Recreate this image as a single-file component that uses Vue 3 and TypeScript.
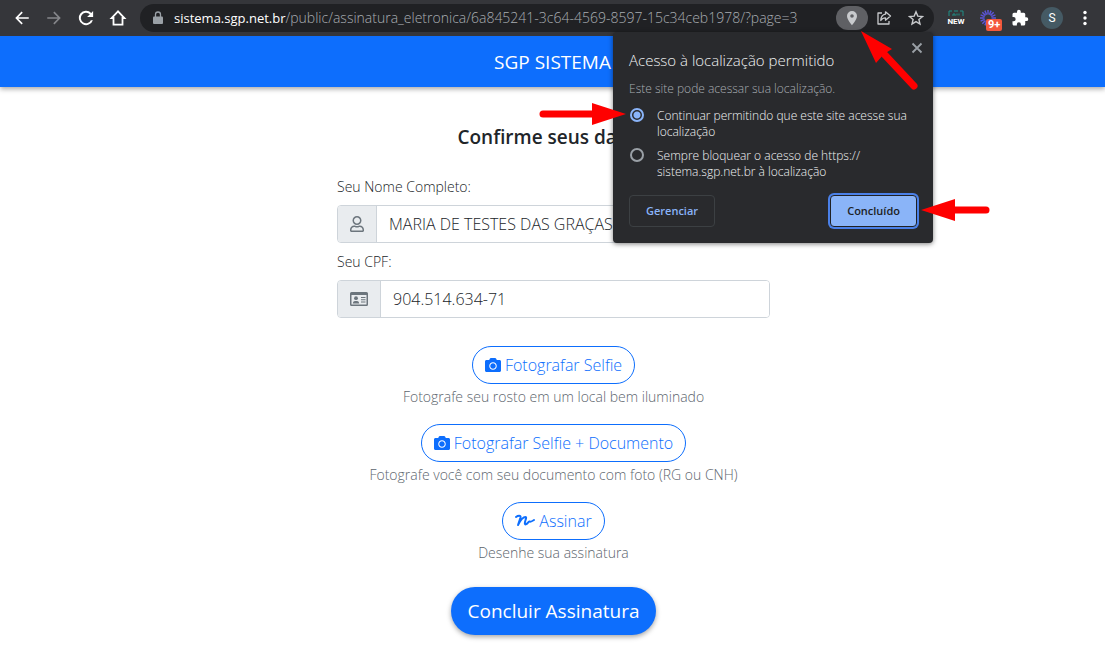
<script setup lang="ts">
import { ref } from 'vue'

const fullName = ref('MARIA DE TESTES DAS GRAÇAS')
const cpf = ref('904.514.634-71')
const permission = ref<'allow' | 'block'>('allow')
</script>

<template>
  <div class="window">
    <header class="toolbar">
      <nav class="nav" aria-label="Navegação">
        <button type="button" class="tool" aria-label="Voltar">
          <svg viewBox="0 0 24 24"><path d="M21 11H7l6-6-1.600-1.600L3 12l8.400 8.600L13 19l-6-6h14z" /></svg>
        </button>
        <button type="button" class="tool dim" aria-label="Avançar">
          <svg viewBox="0 0 24 24"><path d="M3 11h14l-6-6 1.600-1.600L21 12l-8.400 8.600L11 19l6-6H3z" /></svg>
        </button>
        <button type="button" class="tool" aria-label="Recarregar">
          <svg viewBox="0 0 24 24"><path d="M19 5.200A9.600 9.600 0 1 0 21.200 15h-2.700a7 7 0 1 1-1.400-7.900L13.500 10.500H21.500V2.500z" /></svg>
        </button>
        <button type="button" class="tool" aria-label="Página inicial">
          <svg viewBox="0 0 24 24"><path d="M12 3.200 3.500 12H6v8.800h12V12h2.500z" fill="none" stroke="currentColor" stroke-width="2.400" /></svg>
        </button>
      </nav>
      <div class="address">
        <svg class="lock" viewBox="0 0 10 14"><path d="M1 5.500h8q1 0 1 1V12q0 1-1 1H1q-1 0-1-1V6.500q0-1 1-1z" /><path d="M2.500 6V3.500a2.500 2.500 0 0 1 5 0V6" fill="none" stroke="currentColor" stroke-width="1.300" /></svg>
        <span class="url"><b>sistema.sgp.net.br</b>/public/assinatura_eletronica/6a845241-3c64-4569-8597-15c34ceb1978/?page=3</span>
        <button type="button" class="pin" aria-label="Localização">
          <svg viewBox="0 0 12 16"><path fill-rule="evenodd" d="M6 1a5 5 0 0 0-5 5c0 3.800 5 9.200 5 9.200S11 9.800 11 6a5 5 0 0 0-5-5zm0 3.200a1.800 1.800 0 1 1 0 3.600 1.800 1.800 0 0 1 0-3.600z" /></svg>
        </button>
        <button type="button" class="small-tool" aria-label="Compartilhar">
          <svg viewBox="0 0 16 16" fill="none" stroke="currentColor" stroke-width="1.300" stroke-linejoin="round"><path d="M6 3H2v11h11v-3" /><path d="M9.500 1.800 14.500 6l-5 4.200V7.800C7.500 7.800 6 8.500 4.800 10.500 5 7 7 4.500 9.500 4.200z" /></svg>
        </button>
        <button type="button" class="small-tool" aria-label="Adicionar aos favoritos">
          <svg viewBox="0 0 16 16" fill="none" stroke="currentColor" stroke-width="1.400"><path d="m8 1.800 1.800 4.300 4.700.4-3.600 3 1.100 4.600-4-2.500-4 2.500 1.100-4.600-3.600-3 4.700-.4z" /></svg>
        </button>
      </div>
      <div class="extensions">
        <button type="button" class="ext new" aria-label="Extensão">
          <svg viewBox="0 0 16 8" fill="none" stroke="#1f8f86"><path d="M1 6V1h3M6 1h4M12 1h3v5" /><path d="M5 6V4h2v2M9 3.500v2M11 3.500v2" /></svg>
          <span>NEW</span>
        </button>
        <button type="button" class="ext burst" aria-label="Notificações">
          <svg viewBox="0 0 18 18" fill="none" stroke="#5c55d6" stroke-width="1.500"><path d="M9 1v4.500M9 12.500V17M1 9h4.500M12.500 9H17M3.300 3.300l3.200 3.200M11.500 11.500l3.200 3.200M3.300 14.700l3.200-3.200M11.500 6.500l3.200-3.200M5.900 1.600l1.700 4.100M10.400 12.300l1.700 4.100M1.600 12.100l4.100-1.700M12.300 7.600l4.100-1.700M1.600 5.900l4.100 1.700M5.900 16.400l1.700-4.100M10.400 5.700l1.700-4.100" /></svg>
          <span class="badge">9+</span>
        </button>
        <button type="button" class="ext" aria-label="Extensões">
          <svg viewBox="0 0 24 24"><path d="M20.500 11H19V7a2 2 0 0 0-2-2h-4V3.500a2.500 2.500 0 0 0-5 0V5H4a2 2 0 0 0-2 2v3.800h1.500a2.700 2.700 0 0 1 0 5.400H2V20c0 1.100.9 2 2 2h3.800v-1.500a2.700 2.700 0 0 1 5.400 0V22H17a2 2 0 0 0 2-2v-4h1.500a2.500 2.500 0 0 0 0-5z" /></svg>
        </button>
        <button type="button" class="avatar">S</button>
        <button type="button" class="ext menu" aria-label="Menu">
          <svg viewBox="0 0 4 16"><circle cx="2" cy="2.500" r="1.700" /><circle cx="2" cy="8" r="1.700" /><circle cx="2" cy="13.500" r="1.700" /></svg>
        </button>
      </div>

      <section class="popup" aria-labelledby="popup-title">
        <button type="button" class="close" aria-label="Fechar">
          <svg viewBox="0 0 12 12"><path d="m1.500 1.500 9 9m0-9-9 9" stroke="currentColor" stroke-width="1.800" /></svg>
        </button>
        <h2 id="popup-title">Acesso à localização permitido</h2>
        <p>Este site pode acessar sua localização.</p>
        <label class="choice">
          <input v-model="permission" type="radio" name="permission" value="allow" />
          <span>Continuar permitindo que este site acesse sua localização</span>
        </label>
        <label class="choice">
          <input v-model="permission" type="radio" name="permission" value="block" />
          <span>Sempre bloquear o acesso de https://<wbr />sistema.sgp.net.br à localização</span>
        </label>
        <div class="actions">
          <button type="button" class="manage">Gerenciar</button>
          <button type="button" class="done">Concluído</button>
        </div>
        <svg class="arrow to-radio" viewBox="0 0 88 22"><path d="M4 11h50" /><polygon points="53,0 87,11 53,22" /></svg>
        <svg class="arrow to-done" viewBox="0 0 70 22"><path d="M66 11H34" /><polygon points="35,0 1,11 35,22" /></svg>
        <svg class="arrow to-pin" viewBox="0 0 60 62"><path d="M54 56 25 25" /><polygon points="1,1 32,19 24,24 16,33" /></svg>
      </section>
    </header>

    <div class="brand">SGP SISTEMA</div>

    <main>
      <form class="form" @submit.prevent>
        <h1>Confirme seus dados</h1>
        <label class="label" for="name">Seu Nome Completo:</label>
        <div class="group">
          <span class="addon">
            <svg class="person" viewBox="0 0 448 512"><path d="M313.600 304c-28.700 0-42.500 16-89.600 16-47.100 0-60.800-16-89.600-16C60.200 304 0 364.200 0 438.400V464c0 26.500 21.500 48 48 48h352c26.500 0 48-21.500 48-48v-25.600c0-74.200-60.200-134.400-134.400-134.400zM400 464H48v-25.600c0-47.600 38.800-86.400 86.400-86.400 14.600 0 38.300 16 89.600 16 51.700 0 74.900-16 89.600-16 47.600 0 86.400 38.800 86.400 86.400V464zM224 288c79.500 0 144-64.500 144-144S303.500 0 224 0 80 64.500 80 144s64.500 144 144 144zm0-240c52.900 0 96 43.100 96 96s-43.100 96-96 96-96-43.100-96-96 43.100-96 96-96z" /></svg>
          </span>
          <input id="name" v-model="fullName" type="text" />
        </div>
        <label class="label" for="cpf">Seu CPF:</label>
        <div class="group">
          <span class="addon">
            <svg class="card" viewBox="0 0 18 14"><path fill-rule="evenodd" d="M1.500 0h15Q18 0 18 1.500v11q0 1.500-1.500 1.500h-15Q0 14 0 12.500v-11Q0 0 1.500 0zM1.500 3v9.500h15V3z" /><circle cx="6" cy="6.200" r="1.900" /><path d="M2.800 11.500q0-2.500 2-2.500h2.400q2 0 2 2.500zM11 5h4.500v1H11zM11 7.300h4.500v1H11zM11 9.600h4.500v1H11z" /></svg>
          </span>
          <input id="cpf" v-model="cpf" type="text" />
        </div>

        <div class="step">
          <button type="button" class="outline">
            <svg class="camera" viewBox="0 0 512 512"><path d="M512 144v288c0 26.500-21.500 48-48 48H48c-26.500 0-48-21.500-48-48V144c0-26.500 21.500-48 48-48h88l12.300-32.900c7-18.700 24.900-31.100 44.900-31.100h125.500c20 0 37.900 12.400 44.900 31.100L376 96h88c26.500 0 48 21.500 48 48zM376 288c0-66.200-53.800-120-120-120s-120 53.800-120 120 53.800 120 120 120 120-53.800 120-120zm-32 0c0 48.500-39.500 88-88 88s-88-39.500-88-88 39.500-88 88-88 88 39.500 88 88z" /></svg>
            Fotografar Selfie
          </button>
          <small>Fotografe seu rosto em um local bem iluminado</small>
        </div>
        <div class="step">
          <button type="button" class="outline">
            <svg class="camera" viewBox="0 0 512 512"><path d="M512 144v288c0 26.500-21.500 48-48 48H48c-26.500 0-48-21.500-48-48V144c0-26.500 21.500-48 48-48h88l12.300-32.900c7-18.700 24.900-31.100 44.900-31.100h125.500c20 0 37.900 12.400 44.900 31.100L376 96h88c26.500 0 48 21.500 48 48zM376 288c0-66.200-53.800-120-120-120s-120 53.800-120 120 53.800 120 120 120 120-53.800 120-120zm-32 0c0 48.500-39.500 88-88 88s-88-39.500-88-88 39.500-88 88-88 88 39.500 88 88z" /></svg>
            Fotografar Selfie + Documento
          </button>
          <small>Fotografe você com seu documento com foto (RG ou CNH)</small>
        </div>
        <div class="step">
          <button type="button" class="outline">
            <svg class="sign" viewBox="0 0 20 16" fill="none" stroke="currentColor" stroke-width="2" stroke-linecap="round" stroke-linejoin="round"><path d="M1 4C3 2.500 6 2 5.500 4.500L3 12C5 8 8 4 10.500 4c2 0-1.500 5-.5 7 1 1.500 3-2 4.500-2.500 1.500 0 .5 1 4.500-1.500" /></svg>
            Assinar
          </button>
          <small>Desenhe sua assinatura</small>
        </div>
        <button type="submit" class="finish">Concluir Assinatura</button>
      </form>
    </main>
  </div>
</template>

<style>
body {
  margin: 0;
  background: #fff;
}
</style>

<style scoped>
.window {
  font-family: "Open Sans", "Noto Sans", sans-serif;
  color: #212529;
}
.window *,
.window *::before {
  box-sizing: border-box;
}
button,
input {
  font: inherit;
  margin: 0;
}
button {
  padding: 0;
  border: 0;
  background: none;
  color: inherit;
}
svg {
  display: block;
  fill: currentColor;
}
svg[fill="none"] {
  fill: none;
}
.toolbar {
  position: relative;
  z-index: 2;
  display: flex;
  align-items: center;
  height: 36px;
  padding: 0 11px 0 12px;
  background: #35363a;
  color: #fff;
}
.nav {
  display: flex;
  gap: 12px;
  margin-right: 12px;
}
.tool {
  width: 20px;
  height: 20px;
}
.tool svg {
  width: 18px;
  height: 18px;
  margin: auto;
}
.dim {
  color: #85868a;
}
.address {
  display: flex;
  flex: 1;
  align-items: center;
  min-width: 0;
  height: 28px;
  padding: 0 10px 0 13px;
  border-radius: 14px;
  background: #202124;
  color: #c8cacd;
}
.lock {
  flex: none;
  width: 10px;
  height: 14px;
  margin-right: 11px;
  color: #9aa0a6;
}
.url {
  flex: 1;
  min-width: 0;
  overflow: hidden;
  font-size: 14px;
  font-weight: 300;
  line-height: 20px;
  white-space: nowrap;
  color: #a8adb2;
}
.url b {
  font-size: 13px;
  font-weight: 400;
  color: #fff;
}
.pin {
  display: grid;
  place-items: center;
  width: 32px;
  height: 24px;
  border-radius: 12px;
  background: #5f6064;
}
.pin svg {
  width: 12px;
  height: 16px;
}
.small-tool {
  margin-left: 8px;
}
.small-tool + .small-tool {
  margin-left: 16px;
}
.small-tool svg {
  width: 16px;
  height: 16px;
}
.extensions {
  display: flex;
  align-items: center;
  gap: 14px;
  margin-left: 13px;
}
.ext {
  position: relative;
  width: 18px;
}
.ext svg {
  width: 18px;
  height: 18px;
}
.new {
  font: 700 8px/8px Roboto, sans-serif;
}
.ext.new svg {
  width: 16px;
  height: 8px;
  margin: auto;
}
.badge {
  position: absolute;
  top: 10px;
  left: 7px;
  padding: 0 2px;
  border-radius: 2px;
  background: #f4583c;
  font: 700 11px/12px Roboto, sans-serif;
}
.avatar {
  width: 22px;
  height: 22px;
  margin: 0 -1px 0 -2px;
  border-radius: 50%;
  background: #455a64;
  font: 12px/22px Roboto, sans-serif;
}
.ext.menu svg {
  width: 4px;
  height: 16px;
  margin: auto;
}
.popup {
  position: absolute;
  top: 32px;
  right: 172px;
  width: 320px;
  padding: 18px 16px 16px;
  border-radius: 4px;
  background: #292a2d;
  box-shadow: 0 1px 5px rgba(0, 0, 0, 0.5);
  color: #f1f3f4;
  font-size: 12px;
  font-weight: 300;
  line-height: 16px;
}
.close {
  position: absolute;
  top: 10px;
  right: 10px;
  color: #9aa0a6;
}
.close svg {
  width: 12px;
  height: 12px;
}
h2 {
  margin: 0 0 11px;
  font-size: 15px;
  font-weight: 300;
  line-height: 20px;
}
.popup p {
  margin: 0 0 11px;
  color: #a8adb2;
}
.choice {
  display: flex;
  gap: 13px;
  margin-bottom: 8px;
}
.choice input {
  flex: none;
  width: 14px;
  height: 14px;
  margin: 0 0 0 1px;
  border: 2px solid #9aa0a6;
  border-radius: 50%;
  appearance: none;
}
.choice input:checked {
  border-color: #8ab4f8;
  background: radial-gradient(circle, #8ab4f8 0 3px, transparent 4px);
}
.actions {
  display: flex;
  justify-content: space-between;
  margin-top: 15px;
  font-size: 11px;
  font-weight: 600;
}
.actions button {
  height: 32px;
  padding: 0 16px;
  border-radius: 4px;
}
.manage {
  border: 1px solid #3c4043;
  color: #8ab4f8;
}
.done {
  border: 1px solid #202124;
  background: #8ab4f8;
  box-shadow: 0 0 0 2px #4a80e8;
  color: #202124;
}
.arrow {
  position: absolute;
  fill: #f00;
  pointer-events: none;
}
.arrow path {
  stroke: #f00;
  stroke-width: 7;
  stroke-linecap: round;
}
.to-radio {
  top: 71px;
  left: -74px;
  width: 88px;
  height: 22px;
}
.to-done {
  top: 167px;
  left: 307px;
  width: 70px;
  height: 22px;
}
.to-pin {
  top: -2px;
  left: 247px;
  width: 60px;
  height: 62px;
}
.brand {
  position: relative;
  z-index: 1;
  padding: 13px 16px 12px;
  background: #0d6efd;
  box-shadow: 0 2px 5px rgba(0, 0, 0, 0.35);
  color: #fff;
  font-size: 19px;
  line-height: 26px;
  text-align: center;
}
main {
  padding: 38px 16px 17px 18px;
}
.form {
  display: flex;
  flex-direction: column;
  align-items: center;
  max-width: 433px;
  margin: 0 auto;
  font-weight: 300;
}
h1 {
  margin: 0 0 28px;
  font-size: 19px;
  font-weight: 600;
  line-height: 24px;
}
.label {
  align-self: flex-start;
  margin-bottom: 8px;
  font-size: 14px;
  line-height: 20px;
}
.group {
  display: flex;
  width: 100%;
  height: 38px;
  margin-bottom: 9px;
  border: 1px solid #ced4da;
  border-radius: 4px;
  overflow: hidden;
}
.addon {
  display: flex;
  align-items: center;
  padding: 0 12px;
  border-right: 1px solid #ced4da;
  background: #e9ecef;
  color: #6c757d;
}
.person {
  width: 14px;
  height: 16px;
}
.card {
  width: 18px;
  height: 14px;
}
.group input {
  flex: 1;
  min-width: 0;
  padding: 0 12px;
  border: 0;
  outline: 0;
  background: #fff;
  color: #212529;
  font-size: 16px;
}
.step {
  display: flex;
  flex-direction: column;
  align-items: center;
  gap: 3px;
  margin-bottom: 17px;
}
.group + .step {
  margin-top: 19px;
}
.outline {
  display: flex;
  align-items: center;
  gap: 4px;
  height: 38px;
  padding: 0 12px;
  border: 1px solid #0d6efd;
  border-radius: 19px;
  color: #0d6efd;
  font-size: 16px;
}
.camera {
  width: 16px;
  height: 16px;
}
.sign {
  width: 20px;
  height: 16px;
}
small {
  color: #5c656d;
  font-size: 14px;
  line-height: 20px;
}
.finish {
  height: 48px;
  margin-top: 7px;
  padding: 0 17px;
  border-radius: 24px;
  background: #0d6efd;
  box-shadow: 0 2px 5px rgba(0, 0, 0, 0.35);
  color: #fff;
  font-size: 19px;
  font-weight: 400;
}
</style>
